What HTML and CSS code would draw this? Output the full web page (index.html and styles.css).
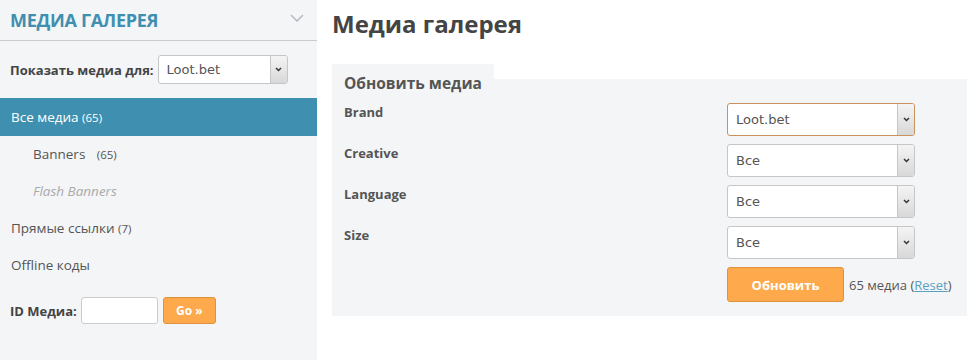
FILE: index.html
```html
<!DOCTYPE html>
<html lang="ru">
<head>
  <meta charset="UTF-8" />
  <title>Медиа галерея</title>
  <link rel="stylesheet" href="styles.css">
</head>
<body>
  <div class="sidebar">
    <div class="side-head">
      <span>Медиа галерея</span>
      <svg class="chev" width="14" height="8" viewBox="0 0 14 8"><path d="M1 1 L7 7 L13 1" fill="none" stroke="#b8bcc2" stroke-width="1.6"/></svg>
    </div>
    <div class="show-for">
      <b>Показать медиа для:</b>
      <div class="select small"><span class="val">Loot.bet</span><span class="arrow"><svg width="7" height="5" viewBox="0 0 7 5"><path d="M1 1 L3.5 3.5 L6 1" fill="none" stroke="#333" stroke-width="1.5"/></svg></span></div>
    </div>
    <ul class="menu">
      <li class="active">Все медиа <small>(65)</small></li>
      <li class="sub">Banners <small>(65)</small></li>
      <li class="sub off">Flash Banners</li>
      <li>Прямые ссылки <small>(7)</small></li>
      <li>Offline коды</li>
    </ul>
    <div class="id-row">
      <b>ID Медиа:</b>
      <input type="text" class="id-input">
      <button class="btn go">Go »</button>
    </div>
  </div>
  <div class="main">
    <h1>Медиа галерея</h1>
    <div class="panel">
      <div class="legend">Обновить медиа</div>
      <div class="form">
        <label>Brand</label>
        <div class="select focus"><span class="val">Loot.bet</span><span class="arrow"><svg width="7" height="5" viewBox="0 0 7 5"><path d="M1 1 L3.5 3.5 L6 1" fill="none" stroke="#333" stroke-width="1.5"/></svg></span></div>
        <label>Creative</label>
        <div class="select"><span class="val">Все</span><span class="arrow"><svg width="7" height="5" viewBox="0 0 7 5"><path d="M1 1 L3.5 3.5 L6 1" fill="none" stroke="#333" stroke-width="1.5"/></svg></span></div>
        <label>Language</label>
        <div class="select"><span class="val">Все</span><span class="arrow"><svg width="7" height="5" viewBox="0 0 7 5"><path d="M1 1 L3.5 3.5 L6 1" fill="none" stroke="#333" stroke-width="1.5"/></svg></span></div>
        <label>Size</label>
        <div class="select"><span class="val">Все</span><span class="arrow"><svg width="7" height="5" viewBox="0 0 7 5"><path d="M1 1 L3.5 3.5 L6 1" fill="none" stroke="#333" stroke-width="1.5"/></svg></span></div>
        <span></span>
        <div class="submit-row">
          <button class="btn update">Обновить</button>
          <span class="count">65 медиа (<a href="#">Reset</a>)</span>
        </div>
      </div>
    </div>
  </div>
</body>
</html>
```

FILE: styles.css
```css
body {
  margin: 0;
  font-family: 'Open Sans', sans-serif;
  color: #555;
  background: #fff;
  display: flex;
  min-height: 360px;
}
.sidebar {
  width: 317px;
  background: #f4f5f7;
  flex-shrink: 0;
}
.side-head {
  height: 41px;
  border-bottom: 1px solid #c9cbcd;
  display: flex;
  align-items: center;
  justify-content: space-between;
  padding: 0 13px 0 10px;
  box-sizing: border-box;
}
.side-head span {
  text-transform: uppercase;
  color: #3f8fb0;
  font-weight: bold;
  font-size: 18px;
  letter-spacing: -0.3px;
}
.chev { margin-top: -4px; }
.show-for {
  display: flex;
  align-items: center;
  gap: 4px;
  padding: 14px 10px 14px 10px;
  font-size: 13px;
  color: #444;
  border-bottom: 1px solid #3f8fb0;
}
.select {
  display: flex;
  height: 33px;
  background: #fff;
  border: 1px solid #c6c6c6;
  border-radius: 3px;
  box-sizing: border-box;
  font-family: 'DejaVu Sans', sans-serif;
  font-size: 13px;
  color: #555;
  overflow: hidden;
}
.select .val {
  flex: 1;
  display: flex;
  align-items: center;
  padding-left: 8px;
}
.select .arrow {
  width: 16px;
  border-left: 1px solid #c6c6c6;
  background: linear-gradient(#f4f4f4, #d8d8d8);
  display: flex;
  align-items: center;
  justify-content: center;
}
.select.small {
  width: 130px;
  height: 29px;
}
.select.focus { border-color: #c8925c; }
.menu {
  list-style: none;
  margin: 0;
  padding: 0;
  font-size: 13.5px;
  color: #555;
}
.menu li {
  height: 37px;
  line-height: 37px;
  padding-left: 11px;
}
.menu small { font-size: 11.5px; }
.menu li.active {
  background: #3f8fb0;
  color: #fff;
}
.menu li.sub { padding-left: 33px; }
.menu li.sub small { margin-left: 8px; }
.menu li.off { color: #aaa; font-style: italic; }
.id-row {
  display: flex;
  align-items: center;
  gap: 4px;
  padding: 13px 10px;
  font-size: 13px;
  color: #444;
}
.id-input {
  width: 77px;
  height: 27px;
  box-sizing: border-box;
  border: 1px solid #ccc;
  border-radius: 3px;
  margin-right: 1px;
}
.btn {
  background: #fea94c;
  border: 1px solid #e0913c;
  border-radius: 3px;
  color: #fff;
  font-family: 'Open Sans', sans-serif;
  font-weight: bold;
  cursor: pointer;
}
.go {
  width: 53px;
  height: 27px;
  font-size: 12px;
}
.main {
  flex: 1;
  padding-left: 15px;
}
h1 {
  margin: 7px 0 0;
  font-size: 24px;
  color: #444;
  line-height: 34px;
}
.panel {
  display: flow-root;
  background: #f4f5f7;
  margin-top: 38px;
  padding: 0 0 16px 12px;
}
.legend {
  display: block;
  width: fit-content;
  min-width: 138px;
  background: #f4f5f7;
  margin: -15px 0 0 -12px;
  padding: 8px 12px 0;
  font-size: 15.5px;
  font-weight: bold;
  color: #555;
}
.form {
  display: grid;
  grid-template-columns: 383px 188px;
  grid-auto-rows: 33px;
  row-gap: 8px;
  margin-top: 9px;
}
.form label {
  font-size: 13px;
  font-weight: bold;
  color: #555;
}
.submit-row {
  display: flex;
  align-items: center;
  gap: 5px;
  white-space: nowrap;
  height: 35px;
}
.update {
  width: 117px;
  height: 35px;
  font-size: 13px;
  flex-shrink: 0;
}
.count { font-size: 13px; color: #555; }
.count a { color: #5aa0c0; }
```
